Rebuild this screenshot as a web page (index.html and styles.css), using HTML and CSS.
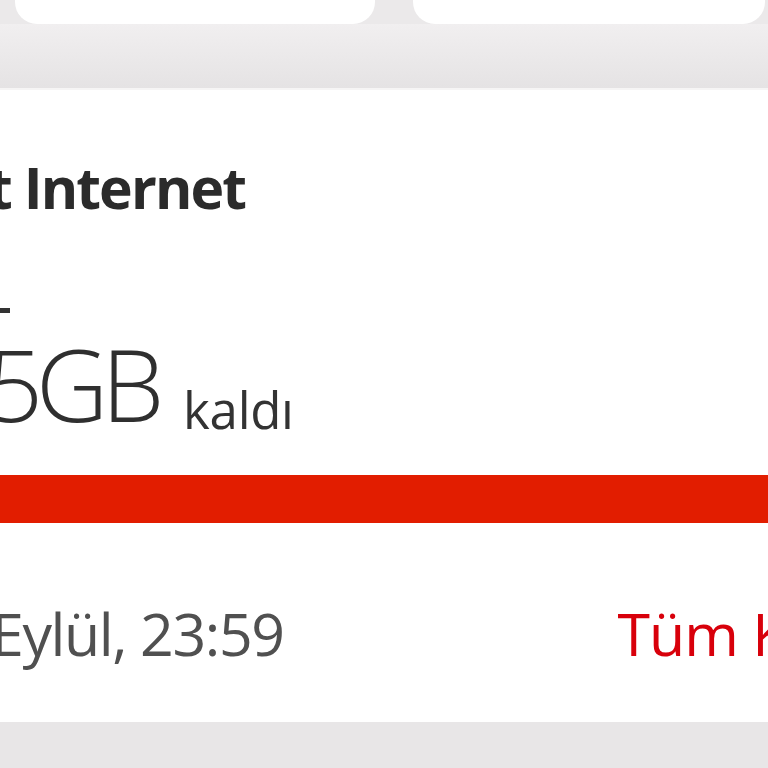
FILE: index.html
```html
<!DOCTYPE html>
<html lang="tr">
  <head>
    <meta charset="utf-8">
    <title>Internet</title>
    <meta name="viewport" content="width=device-width, initial-scale=1">
    <link rel="stylesheet" href="styles.css">
  </head>
  <body>
    <div class="top-cards">
      <div class="top-card"></div>
      <div class="top-card"></div>
    </div>
    <div class="gap-band"></div>
    <div class="plan-card">
      <h2 class="plan-title">t Internet</h2>
      <div class="plan-mark"></div>
      <div class="plan-amount">
        <span class="amount-value">5GB</span>
        <span class="amount-label">kaldı</span>
      </div>
      <div class="usage-bar"></div>
      <div class="plan-footer">
        <span class="plan-date">Eylül, 23:59</span>
        <span class="plan-link">Tüm Kalanlar</span>
      </div>
    </div>
    <div class="bottom-band"></div>
  </body>
</html>
```

FILE: styles.css
```css
html {font-family: "Open Sans", sans-serif;}
body {margin: 0; width: 768px; height: 768px; overflow: hidden; background-color: #ebe9ea; color: #333;}
.top-cards {display: flex; gap: 38px; padding-left: 15px; height: 24px;}
.top-card {flex: 0 0 360px; background: #fff; border-radius: 0 0 22px 22px;}
.top-card + .top-card {flex-basis: 352px;}
.gap-band {height: 64px; background: linear-gradient(#f1eff0, #e5e3e4); border-bottom: 2px solid #f6f5f5;}
.plan-card {background: #fff; height: 632px; margin-left: -20px; padding-top: 62px; box-sizing: border-box; white-space: nowrap;}
.plan-title {margin: 0; font-size: 57px; line-height: 70px; font-weight: 700; color: #2b2b2b; margin-left: 8px; letter-spacing: -1.9px;}
.plan-mark {width: 10px; height: 5px; background: #333; margin: 86px 0 0 20px;}
.plan-amount {display: flex; align-items: baseline; gap: 26px; margin-left: 6px; margin-top: 0; height: 140px;}
.amount-value {font-size: 100px; font-weight: 300; line-height: 140px; color: #2f2f2f; letter-spacing: -7px;}
.amount-label {font-size: 51px; font-weight: 400; color: #333; letter-spacing: -0.3px; position: relative; top: 7px;}
.usage-bar {height: 48px; background: #e21d00; margin-top: 22px;}
.plan-footer {display: flex; align-items: baseline; gap: 334px; margin-top: 70px;}
.plan-date {font-size: 59px; color: #505050; margin-left: 11px; line-height: 80px; letter-spacing: -1.4px;}
.plan-link {font-size: 59px; color: #d8000b; letter-spacing: -1px;}
.bottom-band {height: 46px; background: #e8e6e7;}
```
